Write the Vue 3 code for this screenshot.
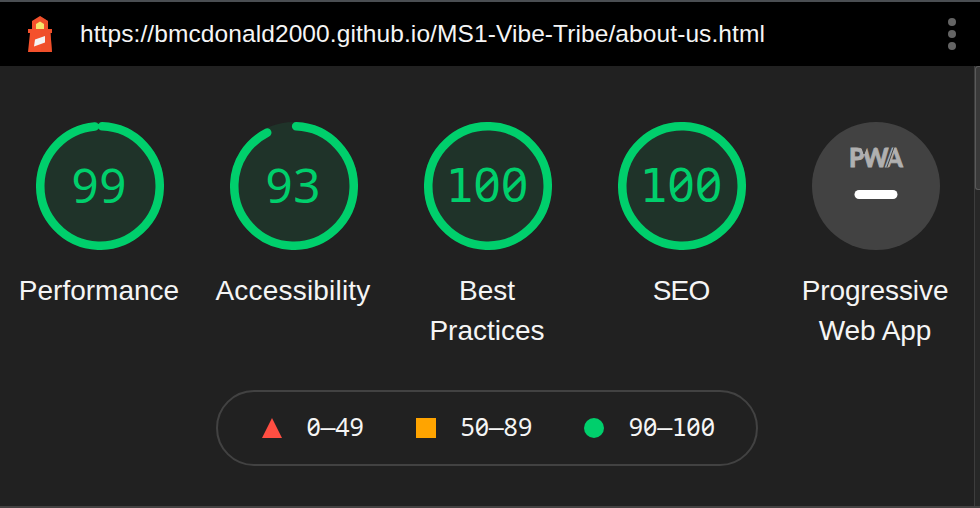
<script setup>
import { h } from 'vue'

const circumference = 2 * Math.PI * 56

const gauges = [
  { lines: ['Performance'], score: 99 },
  { lines: ['Accessibility'], score: 93, wide: true },
  { lines: ['Best', 'Practices'], score: 100 },
  { lines: ['SEO'], score: 100, narrow: true },
]

const legend = [
  { shape: 'triangle', range: '0–49' },
  { shape: 'square', range: '50–89' },
  { shape: 'circle', range: '90–100' },
]

function dash(score) {
  const arc = score === 100 ? circumference : (circumference * score) / 100 - 4
  return `${arc} ${circumference}`
}

// Fixed-pitch figures: every character sits in a cell of equal width.
const Figures = (props) =>
  h(
    'span',
    { class: 'figures' },
    [...String(props.value)].map((c) =>
      h('span', { class: ['cell', { one: c === '1', rule: c === '–' }] }, c)
    )
  )
Figures.props = ['value']
</script>

<template>
  <div class="window">
    <header class="topbar">
      <svg class="logo" width="24" height="36" viewBox="0 0 24 36">
        <path d="M12 0 20 5V13H24V17H22.5L24 36H0L2 17H0V13H4V5Z" fill="#f4512c" />
        <path d="M12 0 20 5V13H24V17H22.5L24 36H13Z" fill="#e94e28" opacity=".45" />
        <path d="M8 8 12 5.5 16 8V13H8Z" fill="#f5e56b" />
        <path d="M7 23.5 17 20V26.5L6 30.5Z" fill="#f4f4f4" />
      </svg>
      <span class="url">https://bmcdonald2000.github.io/MS1-Vibe-Tribe/about-us.html</span>
      <span class="menu"><i></i><i></i><i></i></span>
    </header>

    <div class="body">
      <main class="report">
        <section class="gauges">
          <div v-for="g in gauges" :key="g.lines[0]" class="gauge">
            <div class="dial">
              <svg class="ring" width="128" height="128" viewBox="0 0 120 120">
                <circle cx="60" cy="60" r="60" fill="#1f3329" />
                <circle
                  cx="60" cy="60" r="56" fill="none" stroke="#00cf6c" stroke-width="8"
                  stroke-linecap="round" :stroke-dasharray="dash(g.score)"
                  transform="rotate(-87.95 60 60)"
                />
              </svg>
              <Figures class="score" :value="g.score" />
            </div>
            <div class="label" :class="{ wide: g.wide, tight: g.narrow }">
              <div v-for="l in g.lines" :key="l">{{ l }}</div>
            </div>
          </div>
          <div class="gauge">
            <svg width="128" height="128" viewBox="0 0 128 128">
              <circle cx="64" cy="64" r="64" fill="#424242" />
              <text class="pwa" x="37" y="44.6" textLength="52" lengthAdjust="spacingAndGlyphs">PWA</text>
              <path d="M49.5 24.5H55L52 32ZM82.3 24.5 74.8 45.5" fill="#424242" stroke="#424242" stroke-width="1" />
              <rect x="42.5" y="68" width="43" height="9" rx="4.5" fill="#fff" />
            </svg>
            <div class="label narrow">
              <div>Progressive</div>
              <div>Web App</div>
            </div>
          </div>
        </section>

        <section class="legend">
          <div v-for="item in legend" :key="item.shape" class="range">
            <svg width="20" height="20" viewBox="0 0 20 20">
              <path v-if="item.shape === 'triangle'" d="M10 0 20 20H0Z" fill="#ff4e42" />
              <rect v-else-if="item.shape === 'square'" width="20" height="20" fill="#ffa400" />
              <circle v-else cx="10" cy="10" r="10" fill="#00cf6c" />
            </svg>
            <Figures :value="item.range" />
          </div>
        </section>
      </main>
      <aside class="scrollbar"><div class="thumb"></div></aside>
    </div>
  </div>
</template>

<style>
body {
  background: #212121;
}
</style>

<style scoped>
.window {
  box-sizing: border-box;
  width: 980px;
  height: 508px;
  display: flex;
  flex-direction: column;
  border-top: 2px solid #4a4e52;
  border-bottom: 2px solid #444242;
  background: #212121;
  color: #f5f5f5;
  font-family: "Liberation Sans", Arial, sans-serif;
  overflow: hidden;
}
.topbar {
  box-sizing: border-box;
  height: 64px;
  flex: none;
  display: flex;
  align-items: center;
  padding: 0 24px 0 28px;
  background: #000;
}
.url {
  margin-left: 28px;
  font-size: 24.5px;
  line-height: 30px;
  letter-spacing: 0.09px;
  white-space: nowrap;
}
.menu {
  margin-left: auto;
  display: grid;
  gap: 4px;
}
.menu i {
  width: 8px;
  height: 8px;
  border-radius: 50%;
  background: #646464;
}
.body {
  flex: 1;
  display: flex;
}
.report {
  width: 974px;
  display: flex;
  flex-direction: column;
}
.gauges {
  display: grid;
  grid-template-columns: repeat(5, 194px);
  padding: 56px 0 0 3px;
}
.gauge {
  display: flex;
  flex-direction: column;
  align-items: center;
}
.dial {
  display: grid;
  place-items: center;
  width: 128px;
  height: 128px;
}
.dial > * {
  grid-area: 1 / 1;
}
.label {
  margin: 21px 2px 0 0;
  font-size: 28px;
  line-height: 40px;
  text-align: center;
  white-space: nowrap;
}
.label.wide {
  letter-spacing: 0.2px;
}
.label.narrow {
  letter-spacing: -0.1px;
}
.label.tight {
  letter-spacing: -0.8px;
}
.pwa {
  font-family: Lato, sans-serif;
  font-weight: 900;
  font-size: 26.5px;
  letter-spacing: -2px;
  fill: #b0b0b0;
  stroke: #b0b0b0;
  stroke-width: 0.8px;
}
:deep(.figures) {
  display: flex;
  align-items: baseline;
  font-family: "Noto Sans", sans-serif;
  font-feature-settings: "zero" 1;
  font-size: 25px;
  line-height: 32px;
  padding-bottom: 2px;
}
:deep(.cell) {
  width: 14.4px;
  display: flex;
  justify-content: center;
}
:deep(.one) {
  font-family: "DejaVu Sans Mono", monospace;
  font-size: 0.98em;
}
:deep(.rule) {
  font-family: "DejaVu Sans Mono", monospace;
}
:deep(.score) {
  color: #00cf6c;
  font-size: 47.5px;
  line-height: 60px;
  margin-right: 2px;
  padding-bottom: 3px;
}
:deep(.score .cell) {
  width: 27.6px;
}
.legend {
  box-sizing: border-box;
  width: 542px;
  height: 76px;
  margin: 39px 0 0 216px;
  padding-left: 44px;
  display: flex;
  align-items: center;
  gap: 52px;
  border: 2px solid #424242;
  border-radius: 38px;
}
.range {
  display: flex;
  align-items: center;
  gap: 24.4px;
}
.scrollbar {
  box-sizing: border-box;
  width: 6px;
  border-left: 1px solid #3d3d3d;
  background: #272727;
}
.thumb {
  box-sizing: border-box;
  height: 124px;
  border: 1px solid #5a5a5a;
  border-right: 0;
  border-radius: 3px 0 0 3px;
  background: #393939;
}
</style>
